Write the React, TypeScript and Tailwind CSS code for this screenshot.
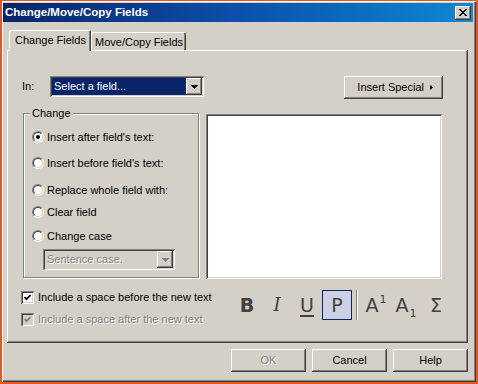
import React from "react";

const raised =
  "shadow-[inset_-1px_-1px_#404040,inset_1px_1px_#fff,inset_-2px_-2px_#808080]";
const sunken =
  "shadow-[inset_1px_1px_#808080,inset_-1px_-1px_#fff,inset_2px_2px_#404040,inset_-2px_-2px_#d4d0c8]";
const disabledText = "text-[#808080] [text-shadow:1px_1px_0_#fff]";

const DownArrow = ({ color = "#000" }: { color?: string }) => (
  <svg width="7" height="4" viewBox="0 0 7 4" shapeRendering="crispEdges">
    <polygon points="0,0 7,0 3.5,4" fill={color} />
  </svg>
);

const ComboButton = ({ disabled }: { disabled?: boolean }) => (
  <div className={`w-[16px] h-full flex items-center justify-center bg-[#d4d0c8] ${raised}`}>
    <DownArrow color={disabled ? "#808080" : "#000"} />
  </div>
);

const Radio = ({ checked, label }: { checked?: boolean; label: string }) => (
  <div className="flex items-center h-[14px]">
    <div className="ml-[8px] w-[12px] h-[12px] rounded-full border border-t-[#808080] border-l-[#808080] border-b-white border-r-white">
      <div className="w-full h-full rounded-full border border-t-[#404040] border-l-[#404040] border-b-[#d4d0c8] border-r-[#d4d0c8] bg-white flex items-center justify-center">
        {checked && <div className="w-[4px] h-[4px] rounded-full bg-black" />}
      </div>
    </div>
    <span className="ml-[3px] leading-none whitespace-nowrap">{label}</span>
  </div>
);

const CheckBox = ({ label, disabled }: { label: string; disabled?: boolean }) => (
  <div className="flex items-center h-[13px]">
    <div
      className={`w-[13px] h-[13px] flex items-center justify-center ${sunken} ${
        disabled ? "bg-[#d4d0c8]" : "bg-white"
      }`}
    >
      <svg width="7" height="7" viewBox="0 0 7 7">
        <polyline
          points="0.5,3 2.5,5.2 6.5,1"
          fill="none"
          stroke={disabled ? "#808080" : "#000"}
          strokeWidth="1.8"
        />
      </svg>
    </div>
    <span className={`ml-[4px] leading-none whitespace-nowrap ${disabled ? disabledText : ""}`}>{label}</span>
  </div>
);

const ToolGlyph = ({ children, active }: { children: React.ReactNode; active?: boolean }) => (
  <div
    className={`w-[30px] h-[30px] flex items-center justify-center text-[#404040] font-['DejaVu_Sans',sans-serif] text-[19px] leading-none ${
      active ? "border border-[#0a246a] bg-[#cdd0e3]" : ""
    }`}
  >
    {children}
  </div>
);

const Button = ({ label, disabled }: { label: string; disabled?: boolean }) => (
  <div
    className={`w-[75px] h-[23px] flex items-center justify-center bg-[#d4d0c8] ${raised} ${
      disabled ? disabledText : ""
    }`}
  >
    {label}
  </div>
);

export default function App() {
  return (
    <div className="w-[478px] h-[384px] bg-[#e2581f] pl-[2px] pr-[2px] pt-[1px] pb-[2px] font-['Liberation_Sans',Arial,sans-serif] text-[11px] text-black">
      <div className="h-full flex flex-col bg-[#d4d0c8] pl-[1px] pr-[3px] pt-[2px] shadow-[inset_1px_1px_#fff,inset_-1px_-1px_#404040,inset_-2px_-2px_#808080]">
        {/* title bar */}
        <div className="h-[19px] flex items-center justify-between bg-linear-to-r from-[#0a246a] via-[#0a50aa] to-[#1088d2] pl-[2px] pr-[2px]">
          <span className="text-white font-bold text-[11.5px] leading-none">Change/Move/Copy Fields</span>
          <div className={`w-[16px] h-[14px] bg-[#d4d0c8] flex items-center justify-center ${raised}`}>
            <svg width="8" height="7" viewBox="0 0 8 7" shapeRendering="crispEdges">
              <path d="M0 0h2v1h-2zM6 0h2v1h-2zM1 1h2v1h-2zM5 1h2v1h-2zM2 2h4v1h-4zM3 3h2v1h-2zM2 4h4v1h-4zM1 5h2v1h-2zM5 5h2v1h-2zM0 6h2v1h-2zM6 6h2v1h-2z" fill="#000" />
            </svg>
          </div>
        </div>

        {/* tabs */}
        <div className="mt-[8px] ml-[4px] w-[461px]">
          <div className="flex items-end h-[20px] pl-[2px]">
            <div className="relative z-10 -mb-[1px] w-[82px] h-[21px] bg-[#d4d0c8] rounded-t-[2px] shadow-[inset_1px_1px_#fff,inset_-1px_0_#404040,inset_-2px_0_#808080] pl-[6px] pt-[5px] leading-none whitespace-nowrap">
              Change Fields
            </div>
            <div className="w-[95px] h-[18px] rounded-t-[2px] shadow-[inset_1px_1px_#fff,inset_-1px_0_#404040,inset_-2px_0_#808080] pl-[4px] pt-[5px] leading-none whitespace-nowrap">
              Move/Copy Fields
            </div>
          </div>

          {/* panel */}
          <div className={`h-[293px] flex flex-col ${raised}`}>
            {/* row 1 */}
            <div className="flex items-start mt-[26px]">
              <div className="ml-[15px] w-[28px] h-[21px] flex items-center">In:</div>
              <div className={`w-[154px] h-[21px] p-[2px] flex bg-white ${sunken}`}>
                <div className="flex-1 bg-[#0a246a] text-white flex items-center pl-[2px] leading-none">
                  Select a field...
                </div>
                <ComboButton />
              </div>
              <div className={`ml-auto mr-[25px] w-[99px] h-[23px] flex items-center justify-end pr-[10px] bg-[#d4d0c8] ${raised}`}>
                <span className="leading-none">Insert Special</span>
                <svg className="ml-[6px]" width="3" height="5" viewBox="0 0 3 5" shapeRendering="crispEdges">
                  <polygon points="0,0 3,2.5 0,5" fill="#000" />
                </svg>
              </div>
            </div>

            {/* row 2 */}
            <div className="flex items-start mt-[14px]">
              <div className="relative ml-[16px] w-[176px] h-[165px] border border-[#808080] shadow-[inset_1px_1px_#fff,1px_1px_#fff] flex flex-col">
                <span className="absolute left-[6px] -top-[8px] px-[2px] bg-[#d4d0c8] leading-[14px]">Change</span>
                <div className="mt-[16px]">
                  <Radio checked label="Insert after field's text:" />
                </div>
                <div className="mt-[12px]">
                  <Radio label="Insert before field's text:" />
                </div>
                <div className="mt-[13px]">
                  <Radio label="Replace whole field with:" />
                </div>
                <div className="mt-[8px]">
                  <Radio label="Clear field" />
                </div>
                <div className="mt-[10px]">
                  <Radio label="Change case" />
                </div>
                <div className={`mt-[6px] ml-[19px] w-[132px] h-[21px] p-[2px] flex bg-[#d4d0c8] ${sunken}`}>
                  <div className={`flex-1 flex items-center pl-[2px] leading-none ${disabledText}`}>
                    Sentence case.
                  </div>
                  <ComboButton disabled />
                </div>
              </div>
              <div className={`ml-[7px] mt-[1px] w-[236px] h-[165px] bg-white ${sunken}`} />
            </div>

            {/* row 3 */}
            <div className="flex items-start mt-[11px]">
              <div className="ml-[14px] w-[211px] flex flex-col">
                <div className="mt-[1px]">
                  <CheckBox label="Include a space before the new text" />
                </div>
                <div className="mt-[9px]">
                  <CheckBox disabled label="Include a space after the new text" />
                </div>
              </div>
              <div className="flex items-center">
                <ToolGlyph>
                  <span className="font-bold">B</span>
                </ToolGlyph>
                <ToolGlyph>
                  <span className="italic font-['DejaVu_Serif',serif] text-[18px]">I</span>
                </ToolGlyph>
                <ToolGlyph>
                  <span className="underline decoration-2 underline-offset-[3px]">U</span>
                </ToolGlyph>
                <ToolGlyph active>P</ToolGlyph>
                <div className="ml-[4px] mr-[3px] w-[2px] h-[30px] border-l border-[#808080] border-r border-r-white" />
                <ToolGlyph>
                  <span className="flex items-start">
                    A<span className="text-[11px] -mt-[2px] ml-[1px]">1</span>
                  </span>
                </ToolGlyph>
                <ToolGlyph>
                  <span className="flex items-end">
                    A<span className="text-[11px] -mb-[4px] ml-[1px]">1</span>
                  </span>
                </ToolGlyph>
                <ToolGlyph>Σ</ToolGlyph>
              </div>
            </div>
          </div>
        </div>

        {/* buttons */}
        <div className="mt-[6px] flex justify-end gap-[6px] pr-[5px]">
          <Button disabled label="OK" />
          <Button label="Cancel" />
          <Button label="Help" />
        </div>
      </div>
    </div>
  );
}
